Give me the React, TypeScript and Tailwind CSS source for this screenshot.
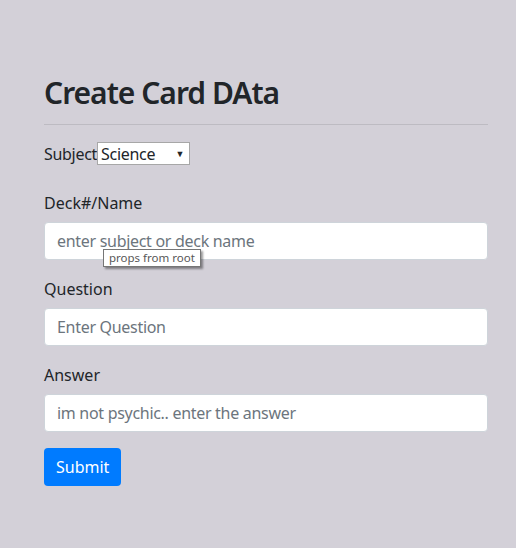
export default function App() {
  return (
    <div className="min-h-[548px] w-full bg-[#d3d0d8] px-[44px] pt-[74px] text-[#212529] font-['Noto_Sans','Open_Sans',sans-serif]">
      <div className="w-[444px]">
        <h2 className="text-[30px] leading-[38px] font-semibold tracking-[-1px]">Create Card DAta</h2>
        <hr className="mt-[12px] border-0 border-t border-[#bdbbc2]" />

        <div className="mt-[16px] flex h-[25px] items-center text-[16px] tracking-[-0.3px]">
          <span>Subject</span>
          <div className="flex h-[23px] w-[93px] items-center justify-between border border-[#a7a7a7] bg-white pl-[3px] pr-[5px] leading-none">
            <span>Science</span>
            <span className="text-[9px]">▼</span>
          </div>
        </div>

        <div className="mt-[25px]">
          <label className="block text-[16px] leading-[24px]">Deck#/Name</label>
          <div className="relative mt-[7px]">
            <input
              placeholder="enter subject or deck name"
              className="h-[38px] w-full rounded-[4px] border border-[#ced4da] bg-white px-[12px] text-[16px] tracking-[-0.3px] placeholder:text-[#6c757d] outline-none"
            />
            <div className="absolute left-[59px] top-[27px] border border-[#767676] bg-white px-[5px] text-[11.5px] leading-[16px] text-[#575757] shadow-[2px_2px_2px_rgba(0,0,0,0.4)]">
              props from root
            </div>
          </div>
        </div>

        <div className="mt-[17px]">
          <label className="block text-[16px] leading-[24px]">Question</label>
          <input
            placeholder="Enter Question"
            className="mt-[7px] h-[38px] w-full rounded-[4px] border border-[#ced4da] bg-white px-[12px] text-[16px] tracking-[-0.3px] placeholder:text-[#6c757d] outline-none"
          />
        </div>

        <div className="mt-[17px]">
          <label className="block text-[16px] leading-[24px]">Answer</label>
          <input
            placeholder="im not psychic.. enter the answer"
            className="mt-[7px] h-[38px] w-full rounded-[4px] border border-[#ced4da] bg-white px-[12px] text-[16px] tracking-[-0.3px] placeholder:text-[#6c757d] outline-none"
          />
        </div>

        <button className="mt-[16px] h-[38px] rounded-[4px] bg-[#007bff] px-[12px] text-[16px] text-white">
          Submit
        </button>
      </div>
    </div>
  );
}
